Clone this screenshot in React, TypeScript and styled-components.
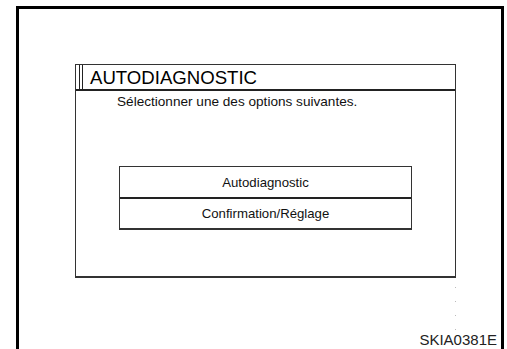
import React from "react";
import styled, { createGlobalStyle } from "styled-components";

const Global = createGlobalStyle`
  html, body { margin: 0; padding: 0; background: #fff; }
  body { font-family: "Liberation Sans", Arial, sans-serif; color: #111; }
`;

const Page = styled.div`
  width: 507px;
  height: 349px;
  box-sizing: border-box;
  padding: 6px 0 0 16px;
  overflow: hidden;
`;

const Frame = styled.div`
  width: 488px;
  height: 343px;
  box-sizing: border-box;
  border: 3px solid #000;
  border-bottom: none;
  padding: 55px 0 0 56px;
  display: flex;
  flex-direction: column;
`;

const Panel = styled.div`
  width: 381px;
  height: 214px;
  box-sizing: border-box;
  border: 1px solid #333;
  border-bottom-width: 2px;
  display: flex;
  flex-direction: column;
`;

const Header = styled.div`
  height: 26px;
  box-sizing: border-box;
  border-bottom: 2px solid #222;
  display: flex;
  align-items: stretch;
`;

const Marker = styled.div`
  width: 2px;
  margin-left: 3px;
  border-left: 1px solid #222;
  border-right: 1px solid #222;
`;

const Title = styled.div`
  font-size: 18.6px;
  line-height: 25px;
  padding-left: 7px;
  color: #000;
`;

const Prompt = styled.div`
  font-size: 13.6px;
  line-height: 15px;
  padding: 3px 0 0 41px;
  color: #111;
`;

const Options = styled.div`
  margin: 57px 0 0 43px;
  width: 293px;
  border: 1px solid #333;
  border-bottom-width: 2px;
  box-sizing: border-box;
`;

const Option = styled.div<{ $first?: boolean }>`
  height: ${(p) => (p.$first ? 32 : 29)}px;
  box-sizing: border-box;
  border-bottom: ${(p) => (p.$first ? "2px solid #222" : "none")};
  display: flex;
  align-items: center;
  justify-content: center;
  font-size: 13.2px;
  color: #111;
`;

const Footer = styled.div`
  flex: 1;
  display: flex;
  flex-direction: column;
  align-items: flex-end;
  padding-right: 4px;
`;

const Dots = styled.div`
  width: 1px;
  height: 44px;
  margin: 9px 41px 0 0;
  background: repeating-linear-gradient(
    to bottom,
    #bbb 0 1px,
    transparent 1px 14px
  );
`;

const Code = styled.div`
  margin-top: 0;
  font-size: 15px;
  color: #222;
`;

export default function App() {
  return (
    <>
      <Global />
      <Page>
        <Frame>
          <Panel>
            <Header>
              <Marker />
              <Title>AUTODIAGNOSTIC</Title>
            </Header>
            <Prompt>Sélectionner une des options suivantes.</Prompt>
            <Options>
              <Option $first>Autodiagnostic</Option>
              <Option>Confirmation/Réglage</Option>
            </Options>
          </Panel>
          <Footer>
            <Dots />
            <Code>SKIA0381E</Code>
          </Footer>
        </Frame>
      </Page>
    </>
  );
}
